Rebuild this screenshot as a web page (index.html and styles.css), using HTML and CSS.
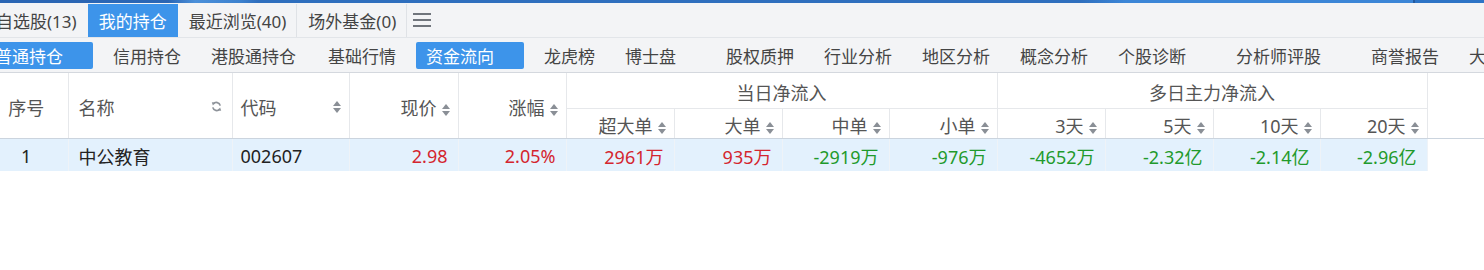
FILE: index.html
```html
<!DOCTYPE html>
<html lang="zh-CN">
<head>
    <meta charset="UTF-8">
    <title>我的持仓 - 资金流向</title>
    <link rel="stylesheet" href="styles.css">
</head>
<body>
    <div class="top-line"></div>

    <div class="page">
        <div class="tab-bar">
            <a class="tab">自选股(13)</a>
            <a class="tab active">我的持仓</a>
            <a class="tab">最近浏览(40)</a>
            <a class="tab">场外基金(0)</a>
            <span class="menu-btn"><i></i><i></i><i></i></span>
        </div>

        <div class="sub-bar">
            <a class="sub wide active">普通持仓</a>
            <a class="sub">信用持仓</a>
            <a class="sub">港股通持仓</a>
            <span class="sub-sep"></span>
            <a class="sub">基础行情</a>
            <a class="sub wide active">资金流向</a>
            <a class="sub">龙虎榜</a>
            <a class="sub wide">博士盘</a>
            <a class="sub">股权质押</a>
            <a class="sub">行业分析</a>
            <a class="sub">地区分析</a>
            <a class="sub">概念分析</a>
            <a class="sub wide">个股诊断</a>
            <a class="sub wide">分析师评股</a>
            <a class="sub">商誉报告</a>
            <a class="sub">大单追踪</a>
        </div>

        <table class="grid">
            <colgroup>
                <col style="width: 83px">
                <col style="width: 164px">
                <col style="width: 117px">
                <col style="width: 109px">
                <col style="width: 108px">
                <col style="width: 108px">
                <col style="width: 108px">
                <col style="width: 107px">
                <col style="width: 108px">
                <col style="width: 108px">
                <col style="width: 108px">
                <col style="width: 107px">
                <col style="width: 107px">
                <col>
            </colgroup>
            <thead>
                <tr class="head-top">
                    <th rowspan="2" class="center">序号</th>
                    <th rowspan="2" class="name">
                        <span class="name-head">名称
                            <svg class="refresh" width="11" height="11" viewBox="0 0 11 11">
                                <path d="M9.2 4.6A3.9 3.9 0 0 0 2.3 3" fill="none" stroke="#8e939a" stroke-width="1.7"/>
                                <path d="M0.8 1.2L4.4 1.6L1.9 4.6Z" fill="#8e939a"/>
                                <path d="M1.8 6.4A3.9 3.9 0 0 0 8.7 8" fill="none" stroke="#8e939a" stroke-width="1.7"/>
                                <path d="M10.2 9.8L6.6 9.4L9.1 6.4Z" fill="#8e939a"/>
                            </svg>
                        </span>
                    </th>
                    <th rowspan="2" class="code"><span class="split">代码<i class="caret"></i></span></th>
                    <th rowspan="2" class="num">现价<i class="caret"></i></th>
                    <th rowspan="2" class="num">涨幅<i class="caret"></i></th>
                    <th colspan="4" class="group">当日净流入</th>
                    <th colspan="4" class="group">多日主力净流入</th>
                    <th rowspan="2" class="filler"></th>
                </tr>
                <tr class="head-sub">
                    <th class="num">超大单<i class="caret"></i></th>
                    <th class="num">大单<i class="caret"></i></th>
                    <th class="num">中单<i class="caret"></i></th>
                    <th class="num">小单<i class="caret"></i></th>
                    <th class="num">3天<i class="caret"></i></th>
                    <th class="num">5天<i class="caret"></i></th>
                    <th class="num">10天<i class="caret"></i></th>
                    <th class="num">20天<i class="caret"></i></th>
                </tr>
            </thead>
            <tbody>
                <tr class="row">
                    <td class="center">1</td>
                    <td class="name">中公教育</td>
                    <td class="code">002607</td>
                    <td class="num up">2.98</td>
                    <td class="num up">2.05%</td>
                    <td class="num up">2961万</td>
                    <td class="num up">935万</td>
                    <td class="num down">-2919万</td>
                    <td class="num down">-976万</td>
                    <td class="num down">-4652万</td>
                    <td class="num down">-2.32亿</td>
                    <td class="num down">-2.14亿</td>
                    <td class="num down">-2.96亿</td>
                    <td class="filler"></td>
                </tr>
            </tbody>
        </table>
    </div>
</body>
</html>
```

FILE: styles.css
```css
body {
    margin: 0;
    padding: 0;
    background-color: #fff;
    font-family: "Noto Sans", "Noto Sans CJK SC", sans-serif;
    color: #222;
    overflow: hidden;
}

.top-line {
    height: 3px;
    background: linear-gradient(90deg,
        #2b66b4 0, #2b66b4 168px, #4b90da 195px, #3d82cf 240px,
        #2f6fbe 258px, #2f6fbe 1080px, #3c86d7 1125px, #3c86d7 1413px,
        #245a9f 1413px, #245a9f 1415px, #2d74c6 1415px);
}

/* the whole panel is scrolled a little to the left */
.page {
    margin-left: -15px;
    width: 1499px;
}

.tab-bar {
    display: flex;
    align-items: stretch;
    height: 33px;
    padding-top: 1px;
    background-color: #f3f4f6;
    border-bottom: 1px solid #e2e5e9;
}

.tab {
    display: flex;
    align-items: center;
    padding: 0 10px 0 11px;
    font-size: 17px;
    color: #444;
    border-right: 1px solid #dfe2e6;
    white-space: nowrap;
}

.tab:has(+ .active) {
    border-right-color: transparent;
}

.tab.active {
    background-color: #3d94ea;
    border-right-color: #3d94ea;
    color: #fff;
}

.menu-btn {
    display: flex;
    flex-direction: column;
    justify-content: center;
    gap: 4px;
    width: 18px;
    margin-left: 6px;
    padding-bottom: 2px;
}

.menu-btn i {
    display: block;
    height: 2px;
    background-color: #70757c;
}

.sub-bar {
    display: flex;
    align-items: center;
    height: 34px;
    background-color: #f3f4f6;
    border-bottom: 1px solid #d4d8de;
    white-space: nowrap;
    overflow: hidden;
}

.sub {
    display: flex;
    align-items: center;
    height: 27px;
    padding: 0 10px;
    margin-right: 10px;
    font-size: 17px;
    color: #444;
    border-radius: 2px;
}

.sub.wide {
    padding-right: 30px;
}

.sub.active {
    background-color: #3d94ea;
    color: #fff;
}

.sub-sep {
    width: 1px;
    height: 24px;
    margin: 0 6px 0 -4px;
    background-color: #d8dbe0;
}

.grid {
    width: 1499px;
    table-layout: fixed;
    border-collapse: collapse;
    font-size: 18px;
}

.grid th,
.grid td {
    padding: 0 8px;
    border: 1px solid #e6e8eb;
    white-space: nowrap;
    overflow: hidden;
}

.grid tr > :first-child {
    border-left: none;
}

.grid th {
    font-weight: normal;
    color: #555;
    padding-top: 3px;
}

.head-top {
    height: 35px;
}

.head-top th {
    border-top: none;
}

.head-sub {
    height: 30px;
}

.head-sub th {
    border-bottom: 1px solid #cbd4de;
}

.grid th[rowspan] {
    border-bottom: 1px solid #cbd4de;
}

.grid .center {
    text-align: center;
}

.grid .name {
    padding-left: 10px;
    text-align: left;
}

.name-head {
    display: flex;
    align-items: center;
    justify-content: space-between;
}

.refresh {
    margin-right: 2px;
}

.grid .code {
    text-align: left;
}

.split {
    display: flex;
    align-items: center;
    justify-content: space-between;
}

.grid .num {
    text-align: right;
}

.grid th.num {
    padding-right: 8px;
}

.grid td.num {
    padding-right: 10px;
}

.grid .group {
    text-align: center;
}

.caret {
    display: inline-block;
    position: relative;
    width: 8px;
    height: 12px;
    margin-left: 5px;
    vertical-align: -1px;
}

.caret::before,
.caret::after {
    content: "";
    position: absolute;
    left: 0;
    border-left: 4px solid transparent;
    border-right: 4px solid transparent;
}

.caret::before {
    top: 0;
    border-bottom: 5px solid #8a8f96;
}

.caret::after {
    bottom: 0;
    border-top: 5px solid #8a8f96;
}

.row {
    height: 33px;
}

.row td {
    background-color: #e3f1fd;
    border-color: #eef3f8;
    border-top: none;
    border-bottom: none;
    padding-top: 2px;
}

.grid .filler {
    border-right: none;
}

.row td.filler {
    background-color: #fff;
    border-left-color: #fff;
}

.up {
    color: #d4252e;
}

.down {
    color: #1f9a2c;
}
```
